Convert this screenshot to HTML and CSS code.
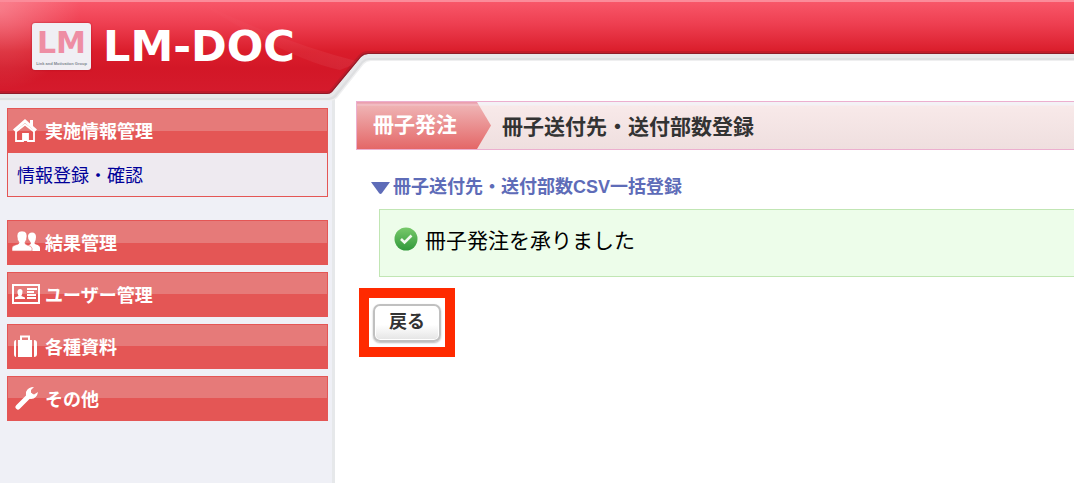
FILE: index.html
```html
<!DOCTYPE html>
<html lang="ja">
  <head>
    <meta charset="UTF-8" />
    <meta name="viewport" content="width=device-width, initial-scale=1.0" />
    <title>LM-DOC</title>
    <link rel="stylesheet" href="styles.css">
  </head>
  <body>
    <svg class="header-bg" aria-hidden="true">
      <defs>
        <linearGradient id="red" gradientUnits="userSpaceOnUse" x1="0" y1="0" x2="0" y2="95">
          <stop offset="0" stop-color="#f9596b" />
          <stop offset="0.25" stop-color="#ee3f51" />
          <stop offset="0.54" stop-color="#da1d2b" />
          <stop offset="0.72" stop-color="#d31727" />
          <stop offset="1" stop-color="#d51b2d" />
        </linearGradient>
        <radialGradient id="shine" gradientUnits="userSpaceOnUse" cx="0" cy="10" r="80">
          <stop offset="0" stop-color="#fff" stop-opacity="0.25" />
          <stop offset="1" stop-color="#fff" stop-opacity="0" />
        </radialGradient>
        <linearGradient id="ray" gradientUnits="userSpaceOnUse" x1="200" y1="0" x2="340" y2="0">
          <stop offset="0" stop-color="#fff" stop-opacity="0" />
          <stop offset="1" stop-color="#fff" stop-opacity="0.06" />
        </linearGradient>
        <clipPath id="shape">
          <path d="M0 0H4000V54H368Q364 54 361 57L332 92Q330 94 327 94H0Z" />
        </clipPath>
      </defs>
      <path d="M0 0H4000V61H371Q367 61 364 64L337 98Q334 101 330 101H0Z" fill="#efeff0" />
      <path d="M0 0H4000V60H370Q366 60 363 63L336 97Q333 100 329 100H0Z" fill="#dedfe1" />
      <path d="M0 0H4000V58H369Q365 58 362 61L334 95Q331 98 328 98H0Z" fill="#e8e8ea" />
      <g clip-path="url(#shape)">
        <rect width="4000" height="95" fill="url(#red)" />
        <rect width="100" height="95" fill="url(#shine)" />
        <path d="M195 0Q280 42 360 62L340 70Q290 60 195 0Z" fill="url(#ray)" />
        <rect width="4000" height="2" fill="#fb8c9a" />
        <path d="M4000 54H368Q364 54 361 57L332 92Q330 94 327 94H0" fill="none" stroke="#7c1a27" stroke-width="6" opacity="0.25" />
        <path d="M4000 54H368Q364 54 361 57L332 92Q330 94 327 94H0" fill="none" stroke="#6e1c28" stroke-width="2" opacity="0.6" />
      </g>
    </svg>

    <div class="layout">
      <div class="sidebar">
        <header class="brand">
          <div class="badge">
            <span class="badge-mark">LM</span>
            <span class="badge-name">Link and Motivation Group</span>
          </div>
          <span class="brand-name">LM-DOC</span>
        </header>

        <nav class="menu">
          <div class="menu-group">
            <button class="menu-item" type="button">
              <svg width="28" height="24" viewBox="0 0 28 24" fill="#fff">
                <path d="M13 1L1 11.500L3 13.500L13 5L23 13.500L25 11.500L21 8V2H18V5.400Z" />
                <path d="M4 13.500L13 6.500L22 13.500V23H16V16H11V23H4Z" fill="none" stroke="#fff" stroke-width="1.800" />
                <path d="M11 15H16V23H11Z" />
              </svg>
              実施情報管理
            </button>
            <div class="submenu">
              <a href="#">情報登録・確認</a>
            </div>
          </div>
          <button class="menu-item" type="button">
            <svg width="28" height="24" viewBox="0 0 28 24" fill="#fff">
              <path d="M16 20V15.500Q20 14 18.500 12Q15.500 9 16 6Q16.500 2.500 20 2.500Q24 2.500 24 7Q24 10 22.500 12.500Q22 14 24 14.500Q28 15.500 28 18V21H16Z" />
              <path d="M0 21V18Q0 15.800 3.500 15Q7.500 14 7 12.500Q5 10 5 6Q5 1 10 1Q15 1 15 6Q15 10 13 12.500Q12.500 14 15 15Q20 16 20 18.500V21Z" stroke="#e56a69" stroke-width="0.600" />
            </svg>
            結果管理
          </button>
          <button class="menu-item" type="button">
            <svg width="28" height="24" viewBox="0 0 28 24" fill="#fff">
              <rect x="1" y="3" width="26" height="18" fill="none" stroke="#fff" stroke-width="2" />
              <path d="M3 17V15.500L6.500 14Q5 11 5.500 9Q6 7 8 7Q10.500 7 10.500 9.500Q10.500 12 9.300 14L13 15.500V17ZM15 6H25V8H15ZM15 9H22V11H15ZM15 12H24V14H15ZM15 15H24V17H15Z" />
            </svg>
            ユーザー管理
          </button>
          <button class="menu-item" type="button">
            <svg width="28" height="24" viewBox="0 0 28 24" fill="#fff">
              <path d="M6 6H20V23H6ZM4 6V23Q2 23 2 20V9Q2 6 4 6ZM22 6V23Q25 23 25 20V9Q25 6 22 6Z" />
              <path d="M9 7V2.500H17V7" fill="none" stroke="#fff" stroke-width="2" />
            </svg>
            各種資料
          </button>
          <button class="menu-item" type="button">
            <svg width="28" height="24" viewBox="0 0 28 24">
              <path d="M6 21L18 9" stroke="#fff" stroke-width="5" stroke-linecap="round" />
              <path d="M22 1Q16 1 14 6Q13 13 19 13Q25 12.500 26 6L22 8.500L19 7L19 4Z" fill="#fff" />
            </svg>
            その他
          </button>
        </nav>
      </div>

      <main class="content">
        <div class="title-bar">
          <div class="title-tag">冊子発注</div>
          <h1>冊子送付先・送付部数登録</h1>
        </div>

        <h2>
          <svg width="19" height="12" viewBox="0 0 19 12"><path d="M0 0H19L11 11Q9.500 13 8 11Z" fill="#5e6cb8" /></svg>
          冊子送付先・送付部数CSV一括登録
        </h2>

        <div class="message" role="status">
          <svg width="24" height="24" viewBox="0 0 24 24">
            <defs>
              <linearGradient id="green" x1="0" y1="0" x2="0" y2="1">
                <stop offset="0" stop-color="#78c96b" />
                <stop offset="1" stop-color="#31993b" />
              </linearGradient>
            </defs>
            <circle cx="12" cy="12" r="11.500" fill="url(#green)" />
            <path d="M7 12L10.500 15.500L17.500 8.500" fill="none" stroke="#f2faf0" stroke-width="2.600" />
          </svg>
          冊子発注を承りました
        </div>

        <div class="highlight">
          <button class="back-button" type="button">戻る</button>
        </div>
      </main>
    </div>
  </body>
</html>
```

FILE: styles.css
```css
* {
  box-sizing: border-box;
}

body {
  font-family: "Noto Sans CJK JP", sans-serif;
  background-color: #ffffff;
  color: #333333;
  margin: 0;
  overflow-x: hidden;
}

/* Red shape behind the logo and the top of the page */
.header-bg {
  position: absolute;
  top: 0;
  left: 0;
  width: 100%;
  height: 102px;
}

.layout {
  display: flex;
  min-height: 100vh;
}

.sidebar {
  flex: 0 0 335px;
  background-color: #eff0f6;
  border-right: 3px solid #e6e8ea;
}

.brand {
  position: relative;
  display: flex;
  align-items: center;
  gap: 12px;
  height: 101px;
  padding: 0 0 9px 32px;
}

.badge {
  display: flex;
  flex-direction: column;
  align-items: center;
  justify-content: center;
  width: 59px;
  height: 47px;
  border-radius: 3px;
  background-color: #f0eff4;
  box-shadow: 0 0 2px #b01020;
  overflow: hidden;
}

.badge-mark {
  font: bold 30px/36px "DejaVu Sans", sans-serif;
  color: #ee8ea4;
}

.badge-name {
  font: bold 4px/6px "Liberation Sans", sans-serif;
  color: #7f8790;
  white-space: nowrap;
}

.brand-name {
  font: bold 43px/50px "DejaVu Sans", sans-serif;
  color: #ffffff;
}

.menu {
  display: flex;
  flex-direction: column;
  gap: 7px;
  padding: 7px 4px 7px 7px;
}

.menu-group {
  margin-bottom: 16px;
}

.menu-item {
  display: flex;
  align-items: center;
  gap: 5px;
  width: 100%;
  height: 45px;
  padding: 0 4px 1px;
  font: bold 18px/24px "Noto Sans CJK JP", sans-serif;
  color: #ffffff;
  background: linear-gradient(#e67a79 50%, #e45655 50%);
  border: 1px solid #e45655;
  cursor: pointer;
}

.submenu {
  padding: 8px 9px;
  font-size: 18px;
  line-height: 27px;
  background-color: #eeeaf0;
  border: 1px solid #e45655;
  border-top: 0;
}

.submenu a {
  color: #000099;
  text-decoration: none;
}

.content {
  flex: 1;
  min-width: 0;
  padding: 101px 0 20px 21px;
}

.title-bar {
  display: flex;
  align-items: center;
  height: 49px;
  background: linear-gradient(#f4f1f5 3px, #f8e9e9 4px, #efdfdf);
  border: 1px solid #ecafcf;
  border-right: 0;
}

.title-tag {
  width: 134px;
  height: 47px;
  padding-left: 16px;
  font-size: 21px;
  font-weight: bold;
  line-height: 42px;
  color: #ffffff;
  background: linear-gradient(#eba0ae 1px, #f3c5c9 3px, #efb2b3 4px, #e46767);
  clip-path: polygon(0 0, 120px 0, 100% 50%, 120px 100%, 0 100%);
}

h1 {
  margin: 0 0 0 11px;
  padding-bottom: 2px;
  font-size: 21px;
  line-height: 30px;
}

h2 {
  display: flex;
  align-items: center;
  gap: 3px;
  margin: 24px 0 8px 15px;
  font-family: "Liberation Sans", "Noto Sans CJK JP", sans-serif;
  font-size: 18px;
  line-height: 27px;
  color: #5e6cb8;
}

.message {
  display: flex;
  align-items: center;
  gap: 7px;
  margin-left: 23px;
  padding: 14px 14px 22px;
  font-size: 21px;
  line-height: 30px;
  color: #000000;
  background-color: #edfdea;
  border: 1px solid #c1e6b4;
  border-right: 0;
}

.highlight {
  display: flex;
  align-items: center;
  justify-content: center;
  width: 96px;
  height: 69px;
  margin: 11px 0 0 3px;
  border: 10px solid #ff2a00;
}

.back-button {
  padding: 2px 14px 8px;
  font: bold 18px/24px "Noto Sans CJK JP", sans-serif;
  color: #333333;
  background: linear-gradient(#ffffff 55%, #e4e4e4);
  border: 2px solid #c0c0c0;
  border-radius: 7px;
  box-shadow: inset 0 0 0 1px #ffffff, 0 1px 2px #bbbbbb;
  cursor: pointer;
}
```
